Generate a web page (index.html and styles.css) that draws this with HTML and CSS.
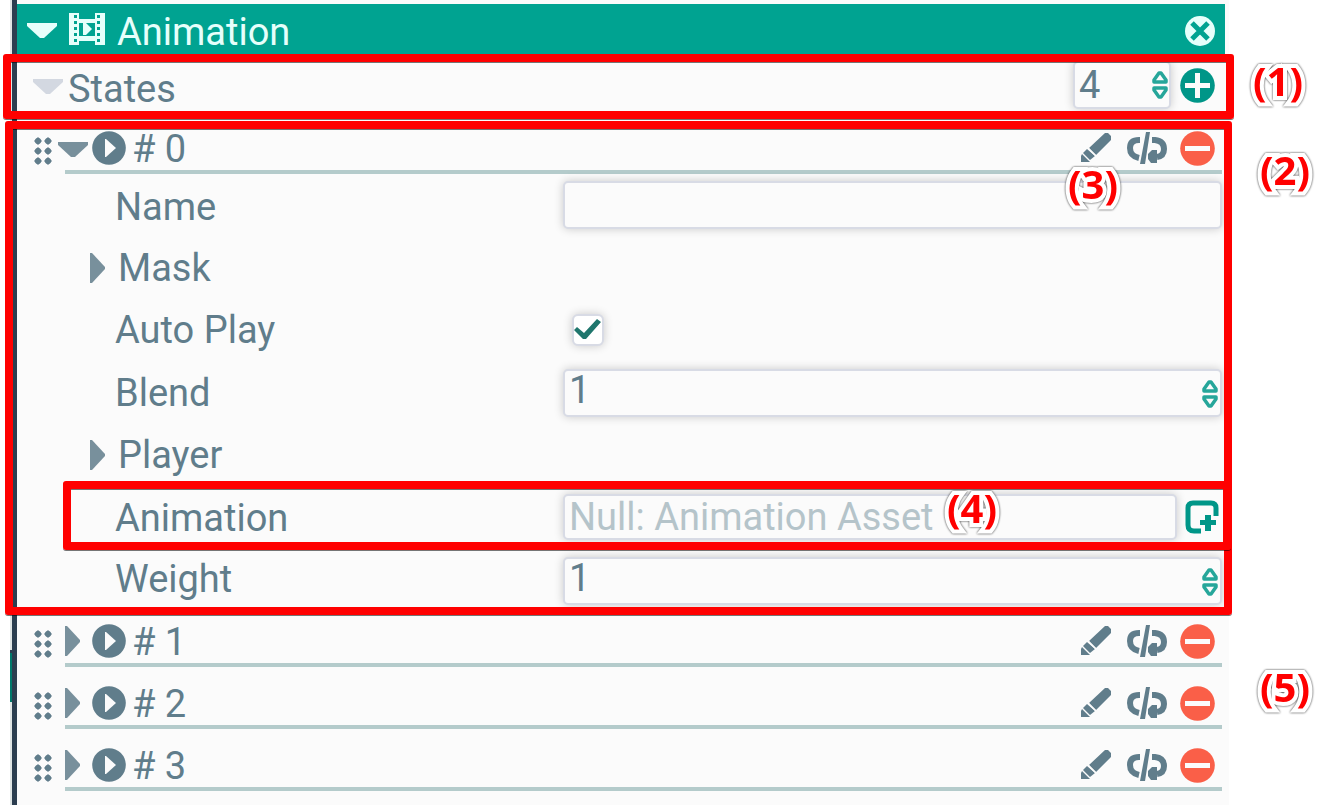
FILE: index.html
```html
<!DOCTYPE html>
<html lang="en">
<head>
<meta charset="utf-8">
<meta name="viewport" content="width=device-width, initial-scale=1">
<title>Animation</title>
<link rel="stylesheet" href="styles.css">
</head>
<body>
<svg class="sprite" aria-hidden="true">
  <symbol id="down" viewBox="0 0 30 16"><path d="M0 0h30v3L17 15h-4L0 3z"/></symbol>
  <symbol id="right" viewBox="0 0 15 30"><path d="M0 0h2l13 14v2L2 30H0z"/></symbol>
  <symbol id="grip" viewBox="0 0 18 28"><path d="M4 0l4 4-4 4-4-4zM14 0l4 4-4 4-4-4zM4 10l4 4-4 4-4-4zM14 10l4 4-4 4-4-4zM4 20l4 4-4 4-4-4zM14 20l4 4-4 4-4-4z"/><circle cx="4" cy="4" r="3"/><circle cx="14" cy="4" r="3"/><circle cx="4" cy="14" r="3"/><circle cx="14" cy="14" r="3"/><circle cx="4" cy="24" r="3"/><circle cx="14" cy="24" r="3"/></symbol>
  <symbol id="play" viewBox="0 0 34 34"><circle cx="17" cy="17" r="16.8"/><path d="M13 8h1l10 9-10 9h-1z" fill="#fbfbfb"/></symbol>
  <symbol id="pencil" viewBox="0 0 32 32"><path d="M25 1h3l3 3v4L16 23l-7-7zM7 17l8 7-5 4-7-7zM2 22l8 8H1v-6z"/><path d="M8 16l8 8" stroke="#fbfbfb" stroke-width="1.500"/></symbol>
  <symbol id="link" viewBox="0 0 42 34"><path d="M20 1h4l-5 32h-5z"/><path d="M14 9h-1Q4 9 4 17q0 8 9 10" fill="none" stroke="currentColor" stroke-width="6"/><path d="M26 9h3q9 1 9 9 0 7-7 8" fill="none" stroke="currentColor" stroke-width="6"/><path d="M31 19v13h-6l-3-4v-5l4-4z"/></symbol>
  <symbol id="minus" viewBox="0 0 35 35"><circle cx="17.500" cy="17.500" r="17.300"/><path d="M5 15h25v5H5z" fill="#fbfbfb"/></symbol>
  <symbol id="plus" viewBox="0 0 35 35"><circle cx="17.500" cy="17.500" r="17.300"/><path d="M15 5h5v10h10v5H20v10h-5V20H5v-5h10z" fill="#fbfbfb"/></symbol>
  <symbol id="spin" viewBox="0 0 16 30"><path d="M7 3h2l5 7v2H2v-2zM7 27h2l5-7v-2H2v2z" fill="none" stroke="currentColor" stroke-width="3.500" stroke-linejoin="round"/></symbol>
  <symbol id="close" viewBox="0 0 30 30"><circle cx="15" cy="15" r="15"/><path d="M7 7l16 16M23 7L7 23" stroke="#00a391" stroke-width="5"/></symbol>
  <symbol id="film" viewBox="0 0 36 32"><path fill-rule="evenodd" d="M0 0h10v6h16V0h10v32H26v-4H10v4H0zM10 10v13h16V10zM5 2v3h3V2zm0 6v3h3V8zm0 6v3h3v-3zm0 6v3h3v-3zm0 6v3h3v-3zM28 2v3h3V2zm0 6v3h3V8zm0 6v3h3v-3zm0 6v3h3v-3zm0 6v3h3v-3z"/><path d="M14 10h3l6 6-6 6h-3z"/></symbol>
  <symbol id="asset" viewBox="0 0 34 34"><path d="M31 16V8q0-5-5-5H8Q3 3 3 8v17q0 6 6 6h7" fill="none" stroke="currentColor" stroke-width="5"/><path d="M20 15h6v5h5v5h-5v6h-6v-6h-5v-5h5z"/></symbol>
</svg>
<main class="page">
  <div class="rail"><i class="rail-mark"></i></div>
  <section class="panel">
    <header class="title-bar">
      <button class="icon-btn" aria-label="Collapse Animation"><svg class="ic-down"><use href="#down"/></svg></button>
      <svg class="ic-film"><use href="#film"/></svg>
      <h1 class="title">Animation</h1>
      <button class="icon-btn push" aria-label="Remove Animation"><svg class="ic-close"><use href="#close"/></svg></button>
    </header>

    <div class="states">
      <button class="icon-btn faded" aria-label="Collapse States"><svg class="ic-down"><use href="#down"/></svg></button>
      <label class="states-label" for="count">States</label>
      <div class="box number count push"><input id="count" type="number" value="4"><svg class="ic-spin"><use href="#spin"/></svg></div>
      <button class="icon-btn teal" aria-label="Add state"><svg class="ic-round"><use href="#plus"/></svg></button>
      <div class="frame frame-states"></div>
      <span class="note note-1">(1)</span>
    </div>

    <ul class="list">
      <li class="item">
        <div class="row">
          <svg class="ic-grip"><use href="#grip"/></svg>
          <div class="head">
            <button class="icon-btn toggle open" aria-label="Collapse state 0"><svg class="ic-down"><use href="#down"/></svg></button>
            <button class="icon-btn" aria-label="Play state 0"><svg class="ic-play"><use href="#play"/></svg></button>
            <span class="name"># 0</span>
            <button class="icon-btn push" aria-label="Edit state 0"><svg class="ic-pencil"><use href="#pencil"/></svg></button>
            <button class="icon-btn" aria-label="Link state 0"><svg class="ic-link"><use href="#link"/></svg></button>
            <button class="icon-btn red" aria-label="Remove state 0"><svg class="ic-round"><use href="#minus"/></svg></button>
          </div>
        </div>
        <div class="fields">
          <div class="field"><label for="name">Name</label><div class="box"><input id="name" type="text"></div></div>
          <div class="field"><div class="group"><button class="icon-btn" aria-label="Expand Mask"><svg class="ic-right"><use href="#right"/></svg></button><span>Mask</span></div></div>
          <div class="field"><label for="auto">Auto Play</label><input id="auto" class="check" type="checkbox" checked></div>
          <div class="field"><label for="blend">Blend</label><div class="box number"><input id="blend" type="number" value="1"><svg class="ic-spin"><use href="#spin"/></svg></div></div>
          <div class="field"><div class="group"><button class="icon-btn" aria-label="Expand Player"><svg class="ic-right"><use href="#right"/></svg></button><span>Player</span></div></div>
          <div class="field">
            <label for="asset-input">Animation</label>
            <div class="asset">
              <div class="box"><input id="asset-input" type="text" placeholder="Null: Animation Asset" readonly></div>
              <button class="icon-btn teal" aria-label="Choose asset"><svg class="ic-asset"><use href="#asset"/></svg></button>
            </div>
            <div class="frame frame-asset"></div>
            <span class="note note-4">(4)</span>
          </div>
          <div class="field"><label for="weight">Weight</label><div class="box number"><input id="weight" type="number" value="1"><svg class="ic-spin"><use href="#spin"/></svg></div></div>
        </div>
        <div class="frame frame-item"></div>
        <span class="note note-2">(2)</span>
        <span class="note note-3">(3)</span>
      </li>
      <li class="item">
        <div class="row">
          <svg class="ic-grip"><use href="#grip"/></svg>
          <div class="head">
            <button class="icon-btn toggle" aria-label="Expand state 1"><svg class="ic-right"><use href="#right"/></svg></button>
            <button class="icon-btn" aria-label="Play state 1"><svg class="ic-play"><use href="#play"/></svg></button>
            <span class="name"># 1</span>
            <button class="icon-btn push" aria-label="Edit state 1"><svg class="ic-pencil"><use href="#pencil"/></svg></button>
            <button class="icon-btn" aria-label="Link state 1"><svg class="ic-link"><use href="#link"/></svg></button>
            <button class="icon-btn red" aria-label="Remove state 1"><svg class="ic-round"><use href="#minus"/></svg></button>
          </div>
        </div>
      </li>
      <li class="item">
        <div class="row">
          <svg class="ic-grip"><use href="#grip"/></svg>
          <div class="head">
            <button class="icon-btn toggle" aria-label="Expand state 2"><svg class="ic-right"><use href="#right"/></svg></button>
            <button class="icon-btn" aria-label="Play state 2"><svg class="ic-play"><use href="#play"/></svg></button>
            <span class="name"># 2</span>
            <button class="icon-btn push" aria-label="Edit state 2"><svg class="ic-pencil"><use href="#pencil"/></svg></button>
            <button class="icon-btn" aria-label="Link state 2"><svg class="ic-link"><use href="#link"/></svg></button>
            <button class="icon-btn red" aria-label="Remove state 2"><svg class="ic-round"><use href="#minus"/></svg></button>
          </div>
        </div>
        <span class="note note-5">(5)</span>
      </li>
      <li class="item">
        <div class="row">
          <svg class="ic-grip"><use href="#grip"/></svg>
          <div class="head">
            <button class="icon-btn toggle" aria-label="Expand state 3"><svg class="ic-right"><use href="#right"/></svg></button>
            <button class="icon-btn" aria-label="Play state 3"><svg class="ic-play"><use href="#play"/></svg></button>
            <span class="name"># 3</span>
            <button class="icon-btn push" aria-label="Edit state 3"><svg class="ic-pencil"><use href="#pencil"/></svg></button>
            <button class="icon-btn" aria-label="Link state 3"><svg class="ic-link"><use href="#link"/></svg></button>
            <button class="icon-btn red" aria-label="Remove state 3"><svg class="ic-round"><use href="#minus"/></svg></button>
          </div>
        </div>
      </li>
    </ul>
  </section>
</main>
</body>
</html>
```
FILE: styles.css
```css
* { box-sizing: border-box; }

body {
  margin: 0;
  background: #fff;
  color: #607d8b;
  font: 38px/44px Roboto, sans-serif;
}

svg { display: block; flex: none; fill: currentColor; }
.sprite { position: absolute; width: 0; height: 0; }

.page {
  display: flex;
  min-height: 100vh;
  padding: 0 91px 0 10px;
}

/* Edge of the neighbouring panel */
.rail { width: 2px; padding-top: 650px; background: #dfe5e4; }
.rail-mark { display: block; height: 52px; border-top: 3px solid #2c3e50; background: #00796b; }

.panel {
  flex: 1;
  min-width: 0;
  padding-top: 4px;
  border-left: 5px solid #2c3e50;
  background: #fbfbfb;
}

.icon-btn {
  display: flex;
  flex: none;
  padding: 0;
  border: 0;
  background: none;
  color: inherit;
}
.push { margin-left: auto; }
.teal { color: #009688; }
.red { color: #fa5f48; }
.faded { color: #d3d8e1; }

.ic-down { width: 30px; height: 16px; }
.ic-right { width: 15px; height: 30px; }
.toggle, .group .icon-btn { color: #78909c; }
.ic-grip { width: 18px; height: 28px; }
.ic-play { width: 34px; height: 34px; }
.ic-pencil { width: 32px; height: 32px; }
.ic-link { width: 42px; height: 34px; }
.ic-round { width: 35px; height: 35px; }
.ic-spin { width: 16px; height: 30px; color: #26a69a; }
.ic-close { width: 30px; height: 30px; }
.ic-film { width: 36px; height: 32px; margin: -4px 12px 0; }
.ic-asset { width: 34px; height: 34px; }

.title-bar {
  display: flex;
  align-items: center;
  height: 54px;
  margin-right: 4px;
  padding: 0 10px;
  background: #00a391;
  color: #e6fffb;
}
.title { margin: 0; padding-top: 2px; font: inherit; }

.states {
  position: relative;
  display: flex;
  align-items: center;
  gap: 5px;
  height: 54px;
  padding: 0 14px 0 16px;
}
.states .faded { padding-top: 4px; }
.states-label { padding-top: 8px; }
.states .teal { margin-left: 4px; }

.list {
  display: flex;
  flex-direction: column;
  gap: 6px;
  margin: 0;
  padding: 6px 7px 0 0;
  list-style: none;
}
.item { position: relative; }
.row { display: flex; align-items: center; gap: 13px; padding-left: 17px; }
.head {
  display: flex;
  flex: 1;
  align-items: center;
  gap: 14px;
  height: 56px;
  padding: 8px 7px 0 0;
  border-bottom: 4px solid #b4cbcb;
}
.row .ic-grip { margin-top: 10px; }
.toggle { width: 15px; margin-right: -2px; }
.toggle.open { width: 30px; margin: 0 -10px 0 -7px; padding-top: 3px; }
.name { margin-left: -8px; padding-top: 2px; }
.head .red { margin-left: -2px; }

.fields { padding-left: 98px; }
.field {
  position: relative;
  display: grid;
  grid-template-columns: 448fr 659fr;
  align-items: center;
  height: 62px;
}
.field:nth-child(even) { height: 63px; }
.field:first-child label { padding-top: 4px; }
.field:last-child { height: 56px; align-items: end; }
.field:last-child label { padding-bottom: 4px; }
.group { display: flex; align-items: center; gap: 13px; margin-left: -25px; }

.box {
  display: flex;
  align-items: center;
  height: 48px;
  padding: 0 2px 0 4px;
  border: 2px solid #d8dbe5;
  border-radius: 5px;
  background: #fbfbfb;
  box-shadow: 0 0 10px #0003;
}
.box input {
  flex: 1;
  min-width: 0;
  width: 100%;
  height: 44px;
  padding: 0;
  border: 0;
  outline: 0;
  background: none;
  color: inherit;
  font: inherit;
  appearance: textfield;
}
.box input::-webkit-inner-spin-button { appearance: none; margin: 0; }
.box input::placeholder { color: #b5c4ca; opacity: 1; }
.field .number input { padding-bottom: 6px; }
.field .number .ic-spin { margin-top: 2px; }
.count { width: 98px; padding-right: 1px; }

.asset { display: flex; align-items: center; gap: 8px; padding: 0 3px 2px 0; }
.asset .box { flex: 1; min-width: 0; height: 46px; }

.check {
  width: 32px;
  height: 32px;
  margin: 0 0 0 9px;
  border: 2px solid #d8dbe5;
  border-radius: 6px;
  background: #fff;
  box-shadow: 0 0 10px #0003;
  appearance: none;
}
.check:checked::before {
  content: "";
  display: block;
  height: 28px;
  background: #1f766d;
  clip-path: polygon(0 14px, 3px 11px, 10px 17px, 23px 3px, 27px 6px, 12px 23px, 9px 23px);
}

/* Annotations laid over the panel */
.frame {
  position: absolute;
  border: 8px solid #f00;
  border-radius: 3px;
  box-shadow: 0 1px 0 #0008, inset 0 1px 0 #0008;
  pointer-events: none;
}
.frame-states { inset: -4px -5px -7px -14px; }
.frame-item { inset: 3px -10px -10px -12px; }
.frame-asset { inset: -5px -9px -1px -52px; z-index: 1; }

.note {
  position: absolute;
  z-index: 2;
  color: #f00;
  font: bold 40px/44px "Noto Sans", sans-serif;
  -webkit-text-stroke: 8px #fff;
  paint-order: stroke fill;
  filter: drop-shadow(0 0 1px #333);
}
.note-1 { top: 1px; right: -74px; }
.note-2 { top: 30px; right: -88px; }
.note-3 { top: 44px; right: 104px; }
.note-4 { top: 0; right: 225px; }
.note-5 { top: -8px; right: -88px; }
```
